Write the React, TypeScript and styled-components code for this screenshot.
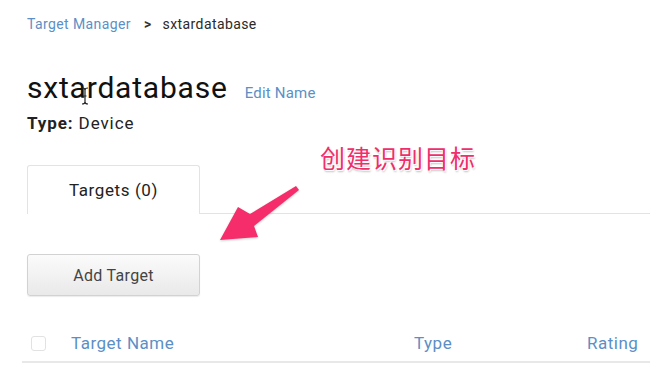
import styled, { createGlobalStyle } from "styled-components";

const GlobalStyle = createGlobalStyle`
  html, body {
    margin: 0;
    padding: 0;
    background: #fff;
    font-family: Roboto, "Liberation Sans", Arial, sans-serif;
  }
`;

function App() {
  return (
    <>
      <GlobalStyle />
      <Page>
        <Breadcrumb>
          <CrumbLink>Target Manager</CrumbLink>
          <CrumbSep>&gt;</CrumbSep>
          <CrumbCurrent>sxtardatabase</CrumbCurrent>
        </Breadcrumb>

        <TitleRow>
          <Title>sxtardatabase</Title>
          <EditLink>Edit Name</EditLink>
          <Cursor width="8" height="18" viewBox="0 0 8 18">
            <path d="M1 1 Q4 1 4 3 Q4 1 7 1 M4 3 V15 M1 17 Q4 17 4 15 Q4 17 7 17 M2.5 9 H5.5" stroke="#222" strokeWidth="1.2" fill="none" />
          </Cursor>
        </TitleRow>
        <TypeLine>
          <b>Type:</b> Device
        </TypeLine>

        <TabBar>
          <Tab>Targets (0)</Tab>
          <TabRest />
        </TabBar>

        <AddButton>Add Target</AddButton>

        <TableHead>
          <CheckBox />
          <HeadCell $width={343}>Target Name</HeadCell>
          <HeadCell $width={173}>Type</HeadCell>
          <HeadCell>Rating</HeadCell>
        </TableHead>

        <Annotation>创建识别目标</Annotation>
        <Arrow width="100" height="70" viewBox="0 0 100 70">
          <polygon
            points="86,6 89,10 44,46 48,57 10,60 28,27 40,34"
            fill="#f52d6b"
          />
        </Arrow>
      </Page>
    </>
  );
}

export default App;

const Page = styled.div`
  position: relative;
  width: 650px;
  height: 387px;
  overflow: hidden;
  padding-left: 27px;
  box-sizing: border-box;
`;

const Breadcrumb = styled.div`
  display: flex;
  align-items: center;
  padding-top: 15px;
  height: 18px;
  font-size: 14px;
  letter-spacing: 0.4px;
`;

const CrumbLink = styled.span`
  color: #5b8fc6;
`;

const CrumbSep = styled.span`
  color: #333;
  font-weight: 700;
  margin: 0 11px 0 13px;
`;

const CrumbCurrent = styled.span`
  color: #2a2a2a;
`;

const TitleRow = styled.div`
  position: relative;
  display: flex;
  align-items: baseline;
  margin-top: 37px;
  height: 36px;
`;

const Title = styled.h1`
  margin: 0;
  font-size: 30px;
  font-weight: 400;
  color: #111;
  letter-spacing: 0.8px;
`;

const EditLink = styled.span`
  margin-left: 17px;
  font-size: 15px;
  color: #5b8fc6;
  letter-spacing: 0.2px;
`;

const Cursor = styled.svg`
  position: absolute;
  left: 54px;
  top: 17px;
`;

const TypeLine = styled.div`
  font-size: 17px;
  color: #222;
  margin-top: 7px;
  letter-spacing: 0.9px;
  b {
    font-weight: 700;
  }
`;

const TabBar = styled.div`
  display: flex;
  margin-top: 32px;
  height: 49px;
`;

const Tab = styled.div`
  width: 173px;
  box-sizing: border-box;
  border: 1px solid #e3e3e3;
  border-bottom: none;
  border-radius: 3px 3px 0 0;
  display: flex;
  align-items: center;
  justify-content: center;
  font-size: 17px;
  letter-spacing: 0.6px;
  color: #222;
`;

const TabRest = styled.div`
  flex: 1;
  border-bottom: 1px solid #e3e3e3;
`;

const AddButton = styled.button`
  display: block;
  margin-top: 40px;
  width: 173px;
  height: 42px;
  border: 1px solid #d2d2d2;
  border-radius: 3px;
  background: linear-gradient(#fbfbfb, #e9e9e9);
  box-shadow: 0 1px 1px rgba(0, 0, 0, 0.08);
  font-family: Roboto, "Liberation Sans", Arial, sans-serif;
  font-size: 16px;
  letter-spacing: 0.3px;
  color: #444;
`;

const TableHead = styled.div`
  display: flex;
  align-items: center;
  margin-top: 29px;
  margin-left: -5px;
  padding-left: 9px;
  height: 36px;
  border-bottom: 2px solid #e8e8e8;
`;

const CheckBox = styled.span`
  width: 13px;
  height: 13px;
  border: 1px solid #e2e2e2;
  border-radius: 3px;
  margin-right: 25px;
`;

const HeadCell = styled.span<{ $width?: number }>`
  width: ${(p) => (p.$width ? `${p.$width}px` : "auto")};
  flex: ${(p) => (p.$width ? "none" : "1")};
  font-size: 17px;
  letter-spacing: 0.5px;
  color: #5b8fc6;
`;

const Annotation = styled.div`
  position: absolute;
  left: 320px;
  top: 139px;
  font-family: "Noto Sans CJK SC", sans-serif;
  font-size: 25px;
  color: #ee2f6c;
  letter-spacing: 1px;
  text-shadow: 1px 1px 0 #fff, -1px -1px 0 #fff, 1px 2px 2px rgba(0, 0, 0, 0.25);
`;

const Arrow = styled.svg`
  position: absolute;
  left: 210px;
  top: 180px;
  filter: drop-shadow(0 1px 1px rgba(0, 0, 0, 0.2));
`;
